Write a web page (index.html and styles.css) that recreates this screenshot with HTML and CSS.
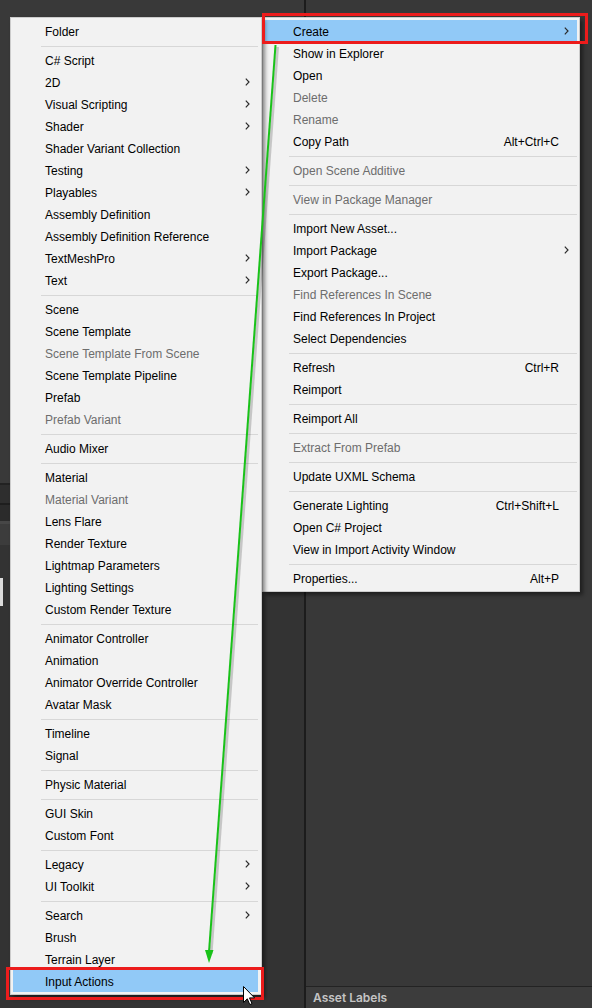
FILE: index.html
```html
<!DOCTYPE html>
<html>
<head>
<meta charset="utf-8">
<link rel="stylesheet" href="styles.css">
</head>
<body>
<div class="screen">
  <div class="panel-left">
    <div class="band band-top"></div>
    <div class="band band-line-a"></div>
    <div class="band band-tab"></div>
    <div class="band band-line-b"></div>
    <div class="band band-bar"></div>
    <div class="band band-hl"></div>
    <div class="band band-head"></div>
    <div class="band band-rest"><div class="field-edge"></div></div>
  </div>
  <div class="divider"></div>
  <div class="panel-right">
    <div class="fill"></div>
    <div class="asset-labels">Asset Labels</div>
  </div>

  <div class="menu menu-create">
    <div class="item"><span class="label">Folder</span></div>
    <div class="sep"></div>
    <div class="item"><span class="label">C# Script</span></div>
    <div class="item"><span class="label">2D</span><span class="sub"><svg width="5" height="8" viewBox="0 0 5 8"><path d="M0.8 0.6 L4 4 L0.8 7.4" fill="none" stroke="#2b2b2b" stroke-width="1.2"/></svg></span></div>
    <div class="item"><span class="label">Visual Scripting</span><span class="sub"><svg width="5" height="8" viewBox="0 0 5 8"><path d="M0.8 0.6 L4 4 L0.8 7.4" fill="none" stroke="#2b2b2b" stroke-width="1.2"/></svg></span></div>
    <div class="item"><span class="label">Shader</span><span class="sub"><svg width="5" height="8" viewBox="0 0 5 8"><path d="M0.8 0.6 L4 4 L0.8 7.4" fill="none" stroke="#2b2b2b" stroke-width="1.2"/></svg></span></div>
    <div class="item"><span class="label">Shader Variant Collection</span></div>
    <div class="item"><span class="label">Testing</span><span class="sub"><svg width="5" height="8" viewBox="0 0 5 8"><path d="M0.8 0.6 L4 4 L0.8 7.4" fill="none" stroke="#2b2b2b" stroke-width="1.2"/></svg></span></div>
    <div class="item"><span class="label">Playables</span><span class="sub"><svg width="5" height="8" viewBox="0 0 5 8"><path d="M0.8 0.6 L4 4 L0.8 7.4" fill="none" stroke="#2b2b2b" stroke-width="1.2"/></svg></span></div>
    <div class="item"><span class="label">Assembly Definition</span></div>
    <div class="item"><span class="label">Assembly Definition Reference</span></div>
    <div class="item"><span class="label">TextMeshPro</span><span class="sub"><svg width="5" height="8" viewBox="0 0 5 8"><path d="M0.8 0.6 L4 4 L0.8 7.4" fill="none" stroke="#2b2b2b" stroke-width="1.2"/></svg></span></div>
    <div class="item"><span class="label">Text</span><span class="sub"><svg width="5" height="8" viewBox="0 0 5 8"><path d="M0.8 0.6 L4 4 L0.8 7.4" fill="none" stroke="#2b2b2b" stroke-width="1.2"/></svg></span></div>
    <div class="sep"></div>
    <div class="item"><span class="label">Scene</span></div>
    <div class="item"><span class="label">Scene Template</span></div>
    <div class="item disabled"><span class="label">Scene Template From Scene</span></div>
    <div class="item"><span class="label">Scene Template Pipeline</span></div>
    <div class="item"><span class="label">Prefab</span></div>
    <div class="item disabled"><span class="label">Prefab Variant</span></div>
    <div class="sep"></div>
    <div class="item"><span class="label">Audio Mixer</span></div>
    <div class="sep"></div>
    <div class="item"><span class="label">Material</span></div>
    <div class="item disabled"><span class="label">Material Variant</span></div>
    <div class="item"><span class="label">Lens Flare</span></div>
    <div class="item"><span class="label">Render Texture</span></div>
    <div class="item"><span class="label">Lightmap Parameters</span></div>
    <div class="item"><span class="label">Lighting Settings</span></div>
    <div class="item"><span class="label">Custom Render Texture</span></div>
    <div class="sep"></div>
    <div class="item"><span class="label">Animator Controller</span></div>
    <div class="item"><span class="label">Animation</span></div>
    <div class="item"><span class="label">Animator Override Controller</span></div>
    <div class="item"><span class="label">Avatar Mask</span></div>
    <div class="sep"></div>
    <div class="item"><span class="label">Timeline</span></div>
    <div class="item"><span class="label">Signal</span></div>
    <div class="sep"></div>
    <div class="item"><span class="label">Physic Material</span></div>
    <div class="sep"></div>
    <div class="item"><span class="label">GUI Skin</span></div>
    <div class="item"><span class="label">Custom Font</span></div>
    <div class="sep"></div>
    <div class="item"><span class="label">Legacy</span><span class="sub"><svg width="5" height="8" viewBox="0 0 5 8"><path d="M0.8 0.6 L4 4 L0.8 7.4" fill="none" stroke="#2b2b2b" stroke-width="1.2"/></svg></span></div>
    <div class="item"><span class="label">UI Toolkit</span><span class="sub"><svg width="5" height="8" viewBox="0 0 5 8"><path d="M0.8 0.6 L4 4 L0.8 7.4" fill="none" stroke="#2b2b2b" stroke-width="1.2"/></svg></span></div>
    <div class="sep"></div>
    <div class="item"><span class="label">Search</span><span class="sub"><svg width="5" height="8" viewBox="0 0 5 8"><path d="M0.8 0.6 L4 4 L0.8 7.4" fill="none" stroke="#2b2b2b" stroke-width="1.2"/></svg></span></div>
    <div class="item"><span class="label">Brush</span></div>
    <div class="item"><span class="label">Terrain Layer</span></div>
    <div class="item active"><span class="label">Input Actions</span></div>
  </div>

  <div class="menu menu-context">
    <div class="item active"><span class="label">Create</span><span class="sub"><svg width="5" height="8" viewBox="0 0 5 8"><path d="M0.8 0.6 L4 4 L0.8 7.4" fill="none" stroke="#2b2b2b" stroke-width="1.2"/></svg></span></div>
    <div class="item"><span class="label">Show in Explorer</span></div>
    <div class="item"><span class="label">Open</span></div>
    <div class="item disabled"><span class="label">Delete</span></div>
    <div class="item disabled"><span class="label">Rename</span></div>
    <div class="item"><span class="label">Copy Path</span><span class="shortcut">Alt+Ctrl+C</span></div>
    <div class="sep"></div>
    <div class="item disabled"><span class="label">Open Scene Additive</span></div>
    <div class="sep"></div>
    <div class="item disabled"><span class="label">View in Package Manager</span></div>
    <div class="sep"></div>
    <div class="item"><span class="label">Import New Asset...</span></div>
    <div class="item"><span class="label">Import Package</span><span class="sub"><svg width="5" height="8" viewBox="0 0 5 8"><path d="M0.8 0.6 L4 4 L0.8 7.4" fill="none" stroke="#2b2b2b" stroke-width="1.2"/></svg></span></div>
    <div class="item"><span class="label">Export Package...</span></div>
    <div class="item disabled"><span class="label">Find References In Scene</span></div>
    <div class="item"><span class="label">Find References In Project</span></div>
    <div class="item"><span class="label">Select Dependencies</span></div>
    <div class="sep"></div>
    <div class="item"><span class="label">Refresh</span><span class="shortcut">Ctrl+R</span></div>
    <div class="item"><span class="label">Reimport</span></div>
    <div class="sep"></div>
    <div class="item"><span class="label">Reimport All</span></div>
    <div class="sep"></div>
    <div class="item disabled"><span class="label">Extract From Prefab</span></div>
    <div class="sep"></div>
    <div class="item"><span class="label">Update UXML Schema</span></div>
    <div class="sep"></div>
    <div class="item"><span class="label">Generate Lighting</span><span class="shortcut">Ctrl+Shift+L</span></div>
    <div class="item"><span class="label">Open C# Project</span></div>
    <div class="item"><span class="label">View in Import Activity Window</span></div>
    <div class="sep"></div>
    <div class="item"><span class="label">Properties...</span><span class="shortcut">Alt+P</span></div>
  </div>

  <div class="callout callout-create"></div>
  <div class="callout callout-input"></div>

  <svg class="arrow-overlay" width="592" height="1008" viewBox="0 0 592 1008">
    <line x1="277.5" y1="47" x2="211" y2="954" stroke="rgba(0,0,0,0.18)" stroke-width="3"/>
    <line x1="275.5" y1="45" x2="209" y2="952" stroke="#19c219" stroke-width="2"/>
    <polygon points="205,950 213.5,950 209,963" fill="#19c219"/>
  </svg>

  <svg class="cursor" width="14" height="22" viewBox="0 0 14 22">
    <path d="M0.5 0.5 L0.5 16.5 L4.3 12.8 L6.8 18.6 L9 17.6 L6.5 11.9 L11.6 11.9 Z" fill="#ffffff" stroke="#000000" stroke-width="1" stroke-linejoin="miter"/>
  </svg>
</div>
</body>
</html>
```

FILE: styles.css
```css
html, body {
  margin: 0;
  padding: 0;
  background: #383838;
}

.screen {
  position: relative;
  width: 592px;
  height: 1008px;
  overflow: hidden;
  display: flex;
  background: #383838;
}

.panel-left {
  width: 304px;
  display: flex;
  flex-direction: column;
}

.band { flex: none; }
.band-top { height: 483px; background: #393939; }
.band-line-a { height: 2px; background: #222222; }
.band-tab { height: 18px; background: #2e2e2e; }
.band-line-b { height: 2px; background: #1e1e1e; }
.band-bar { height: 16px; background: #2b2b2b; }
.band-hl { height: 3px; background: #474747; }
.band-head { height: 21px; background: #3c3c3c; }
.band-rest { flex: 1; background: #333333; padding-top: 33px; }

.field-edge {
  width: 3px;
  height: 28px;
  background: #dcdcdc;
}

.divider {
  width: 2px;
  background: #1c1c1c;
}

.panel-right {
  flex: 1;
  display: flex;
  flex-direction: column;
  background: #383838;
}

.fill { flex: 1; }

.asset-labels {
  height: 21px;
  border-top: 1px solid #232323;
  background: #3c3c3c;
  color: #c4c4c4;
  font-family: Inter, "Liberation Sans", sans-serif;
  font-weight: 600;
  font-size: 12px;
  line-height: 22px;
  padding-left: 7px;
}

/* Menus */
.menu {
  position: absolute;
  top: 17px;
  box-sizing: border-box;
  background: #f2f2f2;
  border: 1px solid #cccccc;
  padding: 2px 2px 2px 2px;
  box-shadow: 3px 3px 4px rgba(0, 0, 0, 0.45);
  font-family: "Segoe UI", "Liberation Sans", Arial, sans-serif;
  font-size: 12px;
  color: #000000;
}

.menu-create {
  left: 10px;
  width: 252px;
  padding-right: 3px;
  z-index: 2;
}

.menu-context {
  left: 262px;
  width: 318px;
  z-index: 1;
}

.item {
  height: 22px;
  display: flex;
  align-items: flex-start;
  white-space: nowrap;
}

.menu-create .item { padding-left: 32px; }
.menu-context .item { padding-left: 28px; }

.item .label,
.item .shortcut {
  line-height: 24px;
}

.item .label { flex: 1; }

.item .shortcut {
  padding-right: 18px;
}

.item .sub {
  width: 18px;
  height: 22px;
  display: flex;
  align-items: center;
  padding-left: 5px;
  box-sizing: border-box;
}

.item .sub svg { display: block; }

.item.disabled { color: #6d6d6d; }

.item.active { background: #91c9f7; }

.sep {
  height: 7px;
  box-sizing: border-box;
  padding-top: 4px;
}

.sep::after {
  content: "";
  display: block;
  height: 1px;
  background: #d7d7d7;
}

.menu-create .sep { margin-left: 28px; }
.menu-context .sep { margin-left: 24px; }

/* Annotation overlays */
.callout {
  position: absolute;
  box-sizing: border-box;
  border: 3px solid #ec1c1c;
  z-index: 3;
}

.callout-create {
  left: 262px;
  top: 13px;
  width: 326px;
  height: 31px;
}

.callout-input {
  left: 6px;
  top: 967px;
  width: 258px;
  height: 33px;
}

.arrow-overlay {
  position: absolute;
  left: 0;
  top: 0;
  z-index: 4;
  pointer-events: none;
}

.cursor {
  position: absolute;
  left: 243px;
  top: 986px;
  z-index: 5;
}
```
